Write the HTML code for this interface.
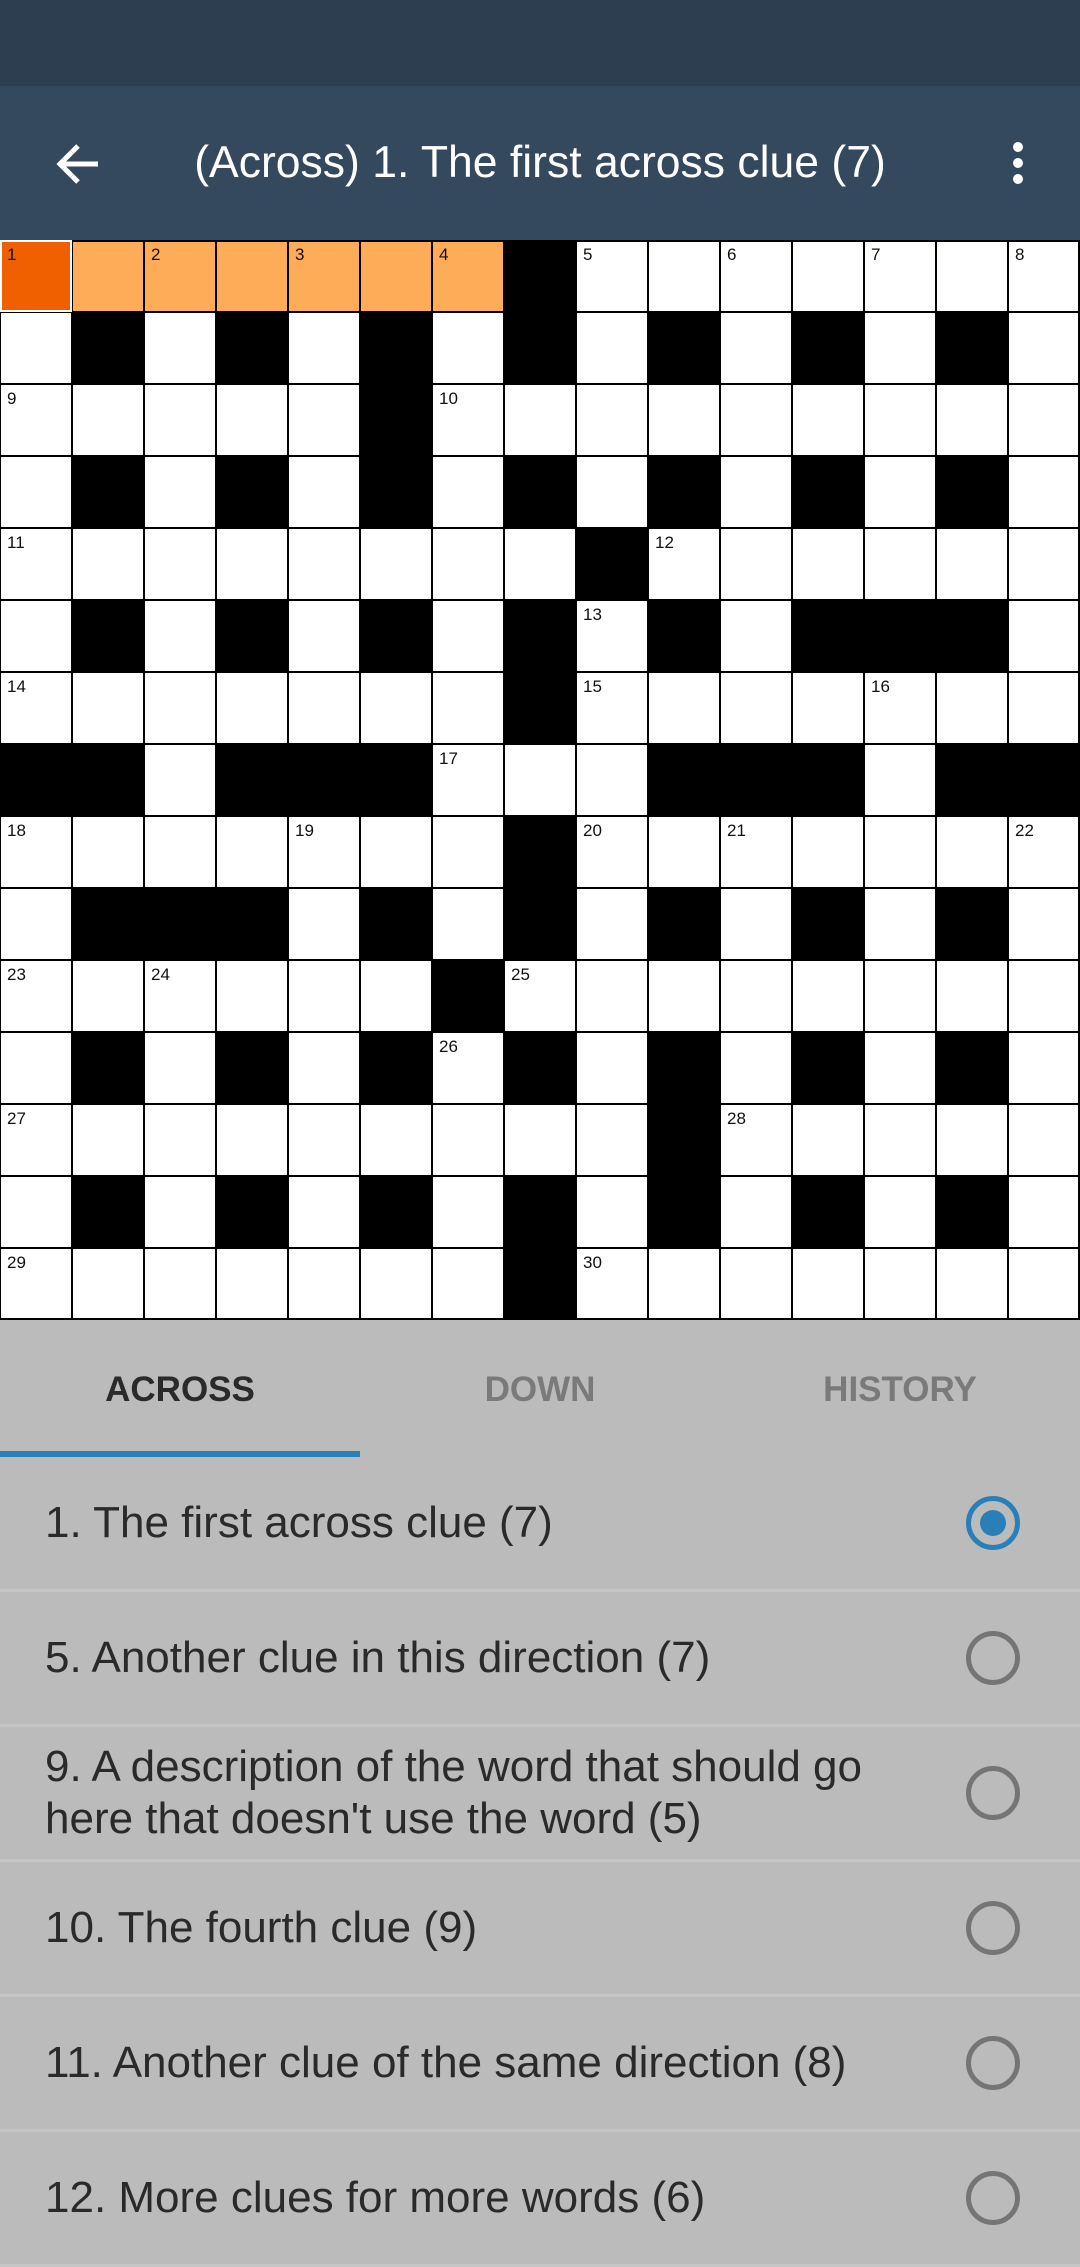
<!DOCTYPE html>
<html><head><meta charset="utf-8"><style>
body{margin:0;width:1080px;height:2246px;overflow:hidden;background:#bbbbbb;font-family:"Liberation Sans",Roboto,sans-serif;position:relative}
.st{position:absolute;left:0;top:0;width:1080px;height:86px;background:#2c3e50}
.tb{position:absolute;left:0;top:86px;width:1080px;height:154px;background:#34495e;color:#fff}
.title{position:absolute;left:0;right:0;top:52px;text-align:center;font-size:44.5px}
.grid{position:absolute;left:0;top:240px}
.tabs{position:absolute;top:1320px;left:0;width:1080px;height:137px}
.tab{position:absolute;top:50px;width:360px;text-align:center;font-size:35px;font-weight:bold;color:#7a7a7a}
.ind{position:absolute;left:0;top:131px;width:360px;height:6px;background:#2980b9}
.row{position:absolute;left:0;width:1080px;height:132px;border-bottom:3px solid #c6c6c6;font-size:44px;color:#2a2a2a}
.row span{position:absolute;left:45px;top:50%;transform:translateY(-50%);line-height:52px}
.r{position:absolute;left:966px;top:50%;margin-top:-27px;width:44px;height:44px;border:5px solid #757575;border-radius:50%}
.r.on{border-color:#2980b9}
.r.on::after{content:"";position:absolute;left:9px;top:9px;width:26px;height:26px;border-radius:50%;background:#2980b9}
</style></head><body>
<div class="st"></div>
<div class="tb">
<svg style="position:absolute;left:54px;top:54px" width="48" height="48" viewBox="0 0 48 48"><path d="M44 24H8M24 6L6 24l18 18" stroke="#fff" stroke-width="5" fill="none"/></svg>
<div class="title">(Across) 1. The first across clue (7)</div>
<svg style="position:absolute;left:1008px;top:55px" width="20" height="50"><circle cx="10" cy="6" r="5" fill="#fff"/><circle cx="10" cy="22" r="5" fill="#fff"/><circle cx="10" cy="38" r="5" fill="#fff"/></svg>
</div>
<svg class="grid" width="1080" height="1080" viewBox="0 0 1080 1080" font-family="Liberation Sans" font-size="17">
<defs><g id="alt"><rect x="72" width="72" height="72"/><rect x="216" width="72" height="72"/><rect x="360" width="72" height="72"/><rect x="504" width="72" height="72"/><rect x="648" width="72" height="72"/><rect x="792" width="72" height="72"/><rect x="936" width="72" height="72"/></g></defs>
<rect width="1080" height="1080" fill="#fff"/>
<rect x="0" y="0" width="72" height="72" fill="#f06000"/>
<rect x="72" y="0" width="432" height="72" fill="#ffac59"/>
<g fill="#000">
<rect x="504" y="0" width="72" height="72"/>
<use href="#alt" y="72"/><use href="#alt" y="216"/><use href="#alt" y="792"/><use href="#alt" y="936"/>
<rect x="360" y="144" width="72" height="72"/>
<rect x="576" y="288" width="72" height="72"/>
<rect x="72" y="360" width="72" height="72"/><rect x="216" y="360" width="72" height="72"/><rect x="360" y="360" width="72" height="72"/><rect x="504" y="360" width="72" height="72"/><rect x="648" y="360" width="72" height="72"/><rect x="792" y="360" width="216" height="72"/>
<rect x="504" y="432" width="72" height="72"/>
<rect x="0" y="504" width="144" height="72"/><rect x="216" y="504" width="216" height="72"/><rect x="648" y="504" width="216" height="72"/><rect x="936" y="504" width="144" height="72"/>
<rect x="504" y="576" width="72" height="72"/>
<rect x="72" y="648" width="216" height="72"/><rect x="360" y="648" width="72" height="72"/><rect x="504" y="648" width="72" height="72"/><rect x="648" y="648" width="72" height="72"/><rect x="792" y="648" width="72" height="72"/><rect x="936" y="648" width="72" height="72"/>
<rect x="432" y="720" width="72" height="72"/>
<rect x="648" y="864" width="72" height="72"/>
<rect x="504" y="1008" width="72" height="72"/>
</g>
<path stroke="#000" stroke-width="2" d="M0 0V1080M72 0V1080M144 0V1080M216 0V1080M288 0V1080M360 0V1080M432 0V1080M504 0V1080M576 0V1080M648 0V1080M720 0V1080M792 0V1080M864 0V1080M936 0V1080M1008 0V1080M1079 0V1080M0 1H1080M0 72H1080M0 144H1080M0 216H1080M0 288H1080M0 360H1080M0 432H1080M0 504H1080M0 576H1080M0 648H1080M0 720H1080M0 792H1080M0 864H1080M0 936H1080M0 1008H1080M0 1079H1080"/>
<rect x="1" y="1" width="70" height="70" fill="none" stroke="#fff" stroke-width="2"/>
<g fill="#111">
<text x="7" y="20">1</text><text x="151" y="20">2</text><text x="295" y="20">3</text><text x="439" y="20">4</text><text x="583" y="20">5</text><text x="727" y="20">6</text><text x="871" y="20">7</text><text x="1015" y="20">8</text>
<text x="7" y="164">9</text><text x="439" y="164">10</text>
<text x="7" y="308">11</text><text x="655" y="308">12</text>
<text x="583" y="380">13</text>
<text x="7" y="452">14</text><text x="583" y="452">15</text><text x="871" y="452">16</text>
<text x="439" y="524">17</text>
<text x="7" y="596">18</text><text x="295" y="596">19</text><text x="583" y="596">20</text><text x="727" y="596">21</text><text x="1015" y="596">22</text>
<text x="7" y="740">23</text><text x="151" y="740">24</text><text x="511" y="740">25</text>
<text x="439" y="812">26</text>
<text x="7" y="884">27</text><text x="727" y="884">28</text>
<text x="7" y="1028">29</text><text x="583" y="1028">30</text>
</g>
</svg>
<div class="tabs">
<div class="tab" style="left:0;color:#2a2a2a">ACROSS</div>
<div class="tab" style="left:360px">DOWN</div>
<div class="tab" style="left:720px">HISTORY</div>
<div class="ind"></div>
</div>
<div class="row" style="top:1457px"><span>1. The first across clue (7)</span><div class="r on"></div></div>
<div class="row" style="top:1592px"><span>5. Another clue in this direction (7)</span><div class="r"></div></div>
<div class="row" style="top:1727px"><span>9. A description of the word that should go<br>here that doesn't use the word (5)</span><div class="r"></div></div>
<div class="row" style="top:1862px"><span>10. The fourth clue (9)</span><div class="r"></div></div>
<div class="row" style="top:1997px"><span>11. Another clue of the same direction (8)</span><div class="r"></div></div>
<div class="row" style="top:2132px"><span>12. More clues for more words (6)</span><div class="r"></div></div>
</body></html>
